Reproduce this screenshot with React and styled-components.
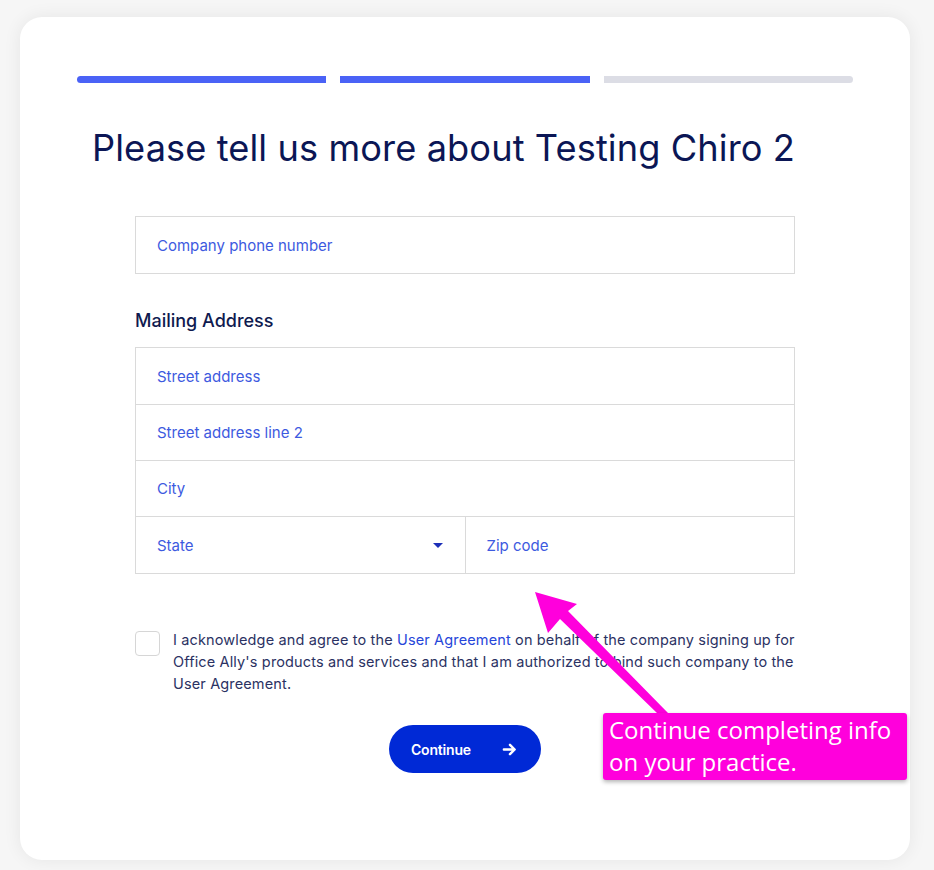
import styled, { createGlobalStyle } from "styled-components";

const GlobalStyle = createGlobalStyle`
  html, body {
    margin: 0;
    padding: 0;
    background: #f6f6f6;
    font-family: Inter, "Liberation Sans", sans-serif;
  }
  * { box-sizing: border-box; }
`;

const Page = styled.div`
  padding: 17px 24px 10px 20px;
`;

const Card = styled.div`
  position: relative;
  width: 890px;
  height: 843px;
  background: #fff;
  border-radius: 22px;
  box-shadow: 0 0 18px rgba(0, 0, 0, 0.07);
  padding: 59px 57px 0;
`;

const Progress = styled.div`
  display: flex;
  gap: 14px;
`;

const Step = styled.div`
  flex: 1;
  height: 7px;
  background: ${(p) => (p.$done ? "#4a62f6" : "#dcdde5")};
  border-radius: ${(p) => p.$radius};
`;

const Title = styled.h1`
  margin: 43px 0 0 15px;
  font-size: 36.2px;
  line-height: 44px;
  font-weight: 400;
  color: #0b1655;
  letter-spacing: 0.1px;
`;

const Form = styled.div`
  width: 660px;
  margin: 46px auto 0;
`;

const Group = styled.div`
  border: 1px solid #dadada;
  & > * + * {
    border-top: 1px solid #dadada;
  }
`;

const Field = styled.div`
  height: 56px;
  display: flex;
  align-items: center;
  justify-content: space-between;
  padding: 0 21px;
  font-size: 15px;
  color: #3d5ae0;
`;

const Split = styled.div`
  display: flex;
  & > ${Field} {
    flex: 1;
  }
  & > ${Field} + ${Field} {
    border-left: 1px solid #dadada;
  }
`;

const Caret = styled.span`
  width: 0;
  height: 0;
  border-left: 5px solid transparent;
  border-right: 5px solid transparent;
  border-top: 5px solid #1c2fb8;
  margin-right: 1px;
`;

const SectionLabel = styled.h2`
  margin: 36px 0 15px;
  font-size: 18px;
  line-height: 22px;
  font-weight: 500;
  color: #0f1a4f;
`;

const Agreement = styled.div`
  display: flex;
  gap: 13px;
  margin-top: 55px;
`;

const Check = styled.div`
  flex: none;
  width: 25px;
  height: 25px;
  margin-top: 2px;
  border: 1px solid #d6d6d6;
  border-radius: 4px;
`;

const AgreeText = styled.p`
  margin: 0 -10px 0 0;
  font-size: 14.5px;
  line-height: 22px;
  letter-spacing: 0.14px;
  color: #2b3263;
`;

const Link = styled.span`
  color: #2646d9;
`;

const Actions = styled.div`
  display: flex;
  justify-content: center;
  margin-top: 30px;
`;

const Button = styled.button`
  width: 152px;
  height: 48px;
  border: none;
  border-radius: 24px;
  background: #0029d6;
  color: #fff;
  font-family: Inter, "Liberation Sans", sans-serif;
  font-size: 14px;
  font-weight: 600;
  display: flex;
  align-items: center;
  padding: 0 24px 0 22px;
  justify-content: space-between;
  letter-spacing: -0.2px;
`;

const Callout = styled.div`
  position: absolute;
  left: 583px;
  top: 696px;
  width: 304px;
  padding: 1px 6px 2px;
  background: #ff00dc;
  color: #fff;
  border-radius: 3px;
  font-family: "Open Sans", sans-serif;
  font-size: 24px;
  line-height: 32px;
  box-shadow: 0 2px 4px rgba(0, 0, 0, 0.3);
`;

const Pointer = styled.svg`
  position: absolute;
  left: 490px;
  top: 553px;
  width: 170px;
  height: 150px;
  pointer-events: none;
`;

const ArrowIcon = () => (
  <svg width="15" height="15" viewBox="0 0 16 16" fill="none">
    <path
      d="M2 8h11M8.5 3l5 5-5 5"
      stroke="#fff"
      strokeWidth="2.6"
      strokeLinecap="round"
      strokeLinejoin="round"
    />
  </svg>
);

export default function App() {
  return (
    <Page>
      <GlobalStyle />
      <Card>
        <Progress>
          <Step $done $radius="4px 0 0 4px" />
          <Step $done $radius="0" />
          <Step $radius="0 4px 4px 0" />
        </Progress>
        <Title>Please tell us more about Testing Chiro 2</Title>
        <Form>
          <Group>
            <Field>Company phone number</Field>
          </Group>
          <SectionLabel>Mailing Address</SectionLabel>
          <Group>
            <Field>Street address</Field>
            <Field>Street address line 2</Field>
            <Field>City</Field>
            <Split>
              <Field>
                State
                <Caret />
              </Field>
              <Field>Zip code</Field>
            </Split>
          </Group>
          <Agreement>
            <Check />
            <AgreeText>
              I acknowledge and agree to the <Link>User Agreement</Link> on behalf of the company signing up for
              Office Ally's products and services and that I am authorized to bind such company to the User
              Agreement.
            </AgreeText>
          </Agreement>
          <Actions>
            <Button>
              Continue
              <ArrowIcon />
            </Button>
          </Actions>
        </Form>
        <Pointer viewBox="0 0 170 150">
          <polygon
            points="25,22 67,34 58,41 158,143 147,143 50,49 38,63"
            fill="#ff00dc"
          />
        </Pointer>
        <Callout>
          Continue completing info
          <br />
          on your practice.
        </Callout>
      </Card>
    </Page>
  );
}
